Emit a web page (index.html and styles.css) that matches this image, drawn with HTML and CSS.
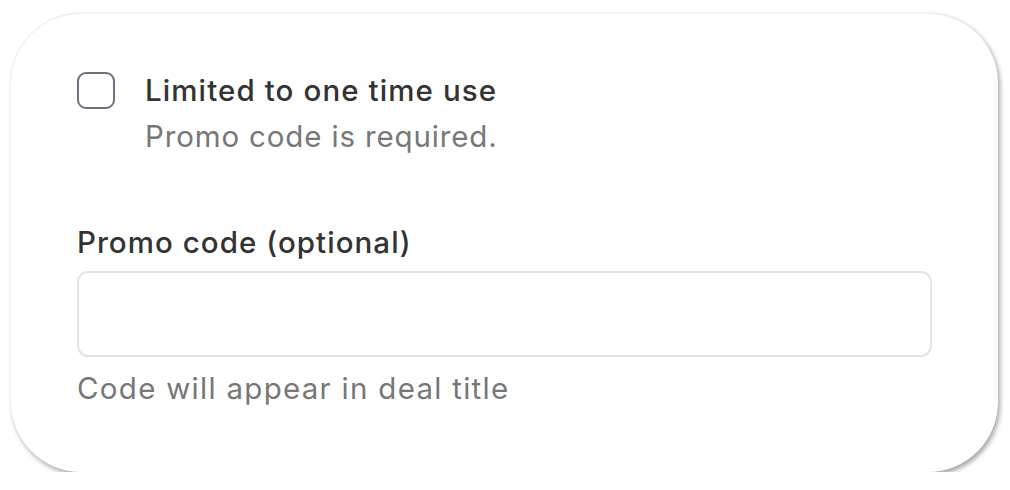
FILE: index.html
```html
<!DOCTYPE html>
<html lang="en">
<head>
<meta charset="utf-8">
<title>Promo code</title>
<link rel="stylesheet" href="styles.css">
</head>
<body>
<div class="card">
  <label class="check-row">
    <span class="checkbox"></span>
    <span class="check-text">
      <span class="check-title">Limited to one time use</span>
      <span class="check-sub">Promo code is required.</span>
    </span>
  </label>
  <div class="field">
    <div class="field-label">Promo code (optional)</div>
    <div class="input"></div>
    <div class="field-help">Code will appear in deal title</div>
  </div>
</div>
</body>
</html>
```

FILE: styles.css
```css
html, body {
  margin: 0;
  padding: 0;
  background: #ffffff;
}
body {
  font-family: Inter, "Noto Sans", sans-serif;
  padding: 13px 12px 0 11px;
}
.card {
  box-sizing: border-box;
  width: 987px;
  height: 459px;
  background: #fff;
  border-radius: 70px;
  border-top: 1px solid #eeeeee;
  box-shadow: 2px 3px 5px rgba(0, 0, 0, 0.35), 0 0 1px rgba(0,0,0,0.08);
  padding: 58px 66px 0 66px;
}
.check-row {
  display: flex;
  align-items: flex-start;
  gap: 30px;
}
.checkbox {
  box-sizing: border-box;
  flex: none;
  width: 38px;
  height: 37px;
  border: 2px solid #6d7180;
  border-radius: 9px;
}
.check-text {
  display: flex;
  flex-direction: column;
  padding-top: 1px;
}
.check-title,
.check-sub,
.field-label,
.field-help {
  font-size: 29.5px;
  line-height: 34px;
}
.check-title {
  font-weight: 500;
  color: #333333;
  letter-spacing: 1.1px;
}
.check-sub {
  color: #777777;
  margin-top: 12px;
  letter-spacing: 0.85px;
}
.field {
  margin-top: 72px;
}
.field-label {
  font-weight: 500;
  color: #333333;
  letter-spacing: 1.05px;
}
.input {
  box-sizing: border-box;
  margin-top: 12px;
  width: 855px;
  height: 86px;
  border: 2px solid #e4e4e4;
  border-radius: 11px;
}
.field-help {
  margin-top: 14px;
  color: #777777;
  letter-spacing: 1.28px;
}
```
